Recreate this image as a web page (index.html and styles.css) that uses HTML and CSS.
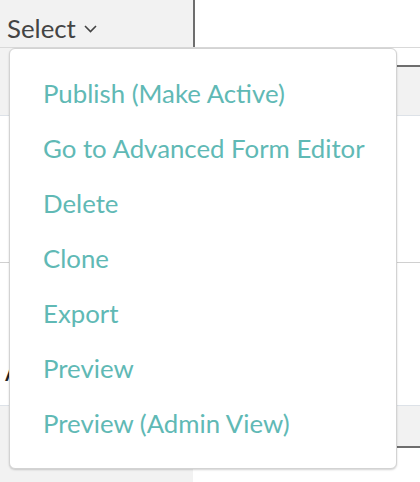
FILE: index.html
```html
<!DOCTYPE html>
<html>
<head>
<meta charset="utf-8">
<link rel="stylesheet" href="styles.css">
</head>
<body>
<div class="page">
  <div class="row row-head">
    <div class="cell-left head-left">
      <span class="select-label">Select</span>
      <svg class="chev" width="13" height="8" viewBox="0 0 13 8"><polyline points="1,1 6.5,6.5 12,1" fill="none" stroke="#444" stroke-width="1.6"/></svg>
    </div>
    <div class="cell-right"></div>
  </div>
  <div class="row row-two">
    <div class="cell-left grey"></div>
    <div class="cell-right two-right"><div class="strip-white"></div><div class="strip-grey"></div></div>
  </div>
  <div class="row row-three"></div>
  <div class="row row-four"><span class="cut-text">A</span></div>
  <div class="row row-five">
    <div class="cell-left grey"></div>
    <div class="cell-right five-right"><div class="strip-grey2"></div><div class="strip-white2"></div></div>
  </div>

  <ul class="menu">
    <li class="menu-item">Publish (Make Active)</li>
    <li class="menu-item">Go to Advanced Form Editor</li>
    <li class="menu-item">Delete</li>
    <li class="menu-item">Clone</li>
    <li class="menu-item">Export</li>
    <li class="menu-item">Preview</li>
    <li class="menu-item">Preview (Admin View)</li>
  </ul>
</div>
</body>
</html>
```
FILE: styles.css
```css
html, body {
  margin: 0;
  padding: 0;
  background: #fff;
}
.page {
  position: relative;
  width: 420px;
  height: 482px;
  overflow: hidden;
  font-family: Lato, "Noto Sans", sans-serif;
}
.row {
  display: flex;
  width: 100%;
}
.cell-left {
  width: 193px;
  flex: none;
}
.cell-right {
  flex: 1;
}
.grey {
  background: #f2f2f2;
}
.row-head {
  height: 47px;
  border-bottom: 1px solid #d9d9d9;
}
.head-left {
  background: #f2f2f2;
  border-right: 2px solid #6e6e6e;
  display: flex;
  align-items: center;
  padding-left: 7px;
  box-sizing: border-box;
  width: 195px;
}
.select-label {
  font-size: 25.8px;
  color: #444;
  line-height: 30px;
  margin-top: 9px;
}
.chev {
  margin-left: 8px;
  margin-top: 11px;
}
.row-two {
  height: 67px;
  border-bottom: 1px solid #dde2e8;
}
.two-right {
  display: flex;
  flex-direction: column;
}
.strip-white {
  height: 17px;
  background: #fff;
  border-bottom: 2px solid #6e6e6e;
}
.strip-grey {
  flex: 1;
  background: #f2f2f2;
}
.row-three {
  height: 146px;
  border-bottom: 1px solid #d0d0d0;
}
.row-four {
  height: 142px;
  border-bottom: 1px solid #dde2e8;
  align-items: flex-end;
}
.cut-text {
  font-size: 26px;
  color: #222;
  padding-left: 5px;
  line-height: 30px;
  margin-bottom: 19px;
}
.row-five {
  height: 76px;
}
.five-right {
  display: flex;
  flex-direction: column;
}
.strip-grey2 {
  height: 40px;
  background: #f2f2f2;
  border-bottom: 2px solid #6e6e6e;
}
.strip-white2 {
  flex: 1;
  background: #fff;
}
.menu {
  position: absolute;
  top: 48px;
  left: 9px;
  width: 388px;
  box-sizing: border-box;
  margin: 0;
  padding: 17px 0;
  list-style: none;
  background: #fff;
  border: 1px solid #d3d3d3;
  border-radius: 6px;
  box-shadow: 0 1px 2px rgba(0,0,0,0.18);
}
.menu-item {
  height: 55px;
  line-height: 55px;
  padding-left: 33px;
  font-size: 25.8px;
  color: #60b9b5;
  white-space: nowrap;
}
```
